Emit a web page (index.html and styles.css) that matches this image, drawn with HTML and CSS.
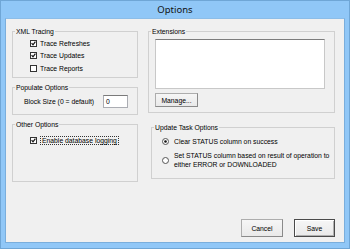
FILE: index.html
```html
<!DOCTYPE html>
<html lang="en">
<head>
    <meta charset="UTF-8">
    <title>Options</title>
    <link rel="stylesheet" href="styles.css">
</head>
<body>
    <div class="window">
        <div class="titlebar">Options</div>
        <div class="client">
            <div class="panes">
                <div class="col col-left">
                    <fieldset class="group group-xml">
                        <legend>XML Tracing</legend>
                        <div class="group-body">
                            <div class="check">
                                <svg class="box" width="7" height="7" viewBox="0 0 7 7"><rect x="0.5" y="0.5" width="6" height="6" fill="#fff" stroke="#333"/><path d="M1.6 3.2 L3 4.8 L5.4 1.6" fill="none" stroke="#111" stroke-width="1.2"/></svg>
                                <span>Trace Refreshes</span>
                            </div>
                            <div class="check">
                                <svg class="box" width="7" height="7" viewBox="0 0 7 7"><rect x="0.5" y="0.5" width="6" height="6" fill="#fff" stroke="#333"/><path d="M1.6 3.2 L3 4.8 L5.4 1.6" fill="none" stroke="#111" stroke-width="1.2"/></svg>
                                <span>Trace Updates</span>
                            </div>
                            <div class="check">
                                <svg class="box" width="7" height="7" viewBox="0 0 7 7"><rect x="0.5" y="0.5" width="6" height="6" fill="#fff" stroke="#333"/></svg>
                                <span>Trace Reports</span>
                            </div>
                        </div>
                    </fieldset>

                    <fieldset class="group group-populate">
                        <legend>Populate Options</legend>
                        <div class="group-body field">
                            <span class="field-label">Block Size (0 = default)</span>
                            <div class="textbox">0</div>
                        </div>
                    </fieldset>

                    <fieldset class="group group-other">
                        <legend>Other Options</legend>
                        <div class="group-body">
                            <div class="check">
                                <svg class="box" width="7" height="7" viewBox="0 0 7 7"><rect x="0.5" y="0.5" width="6" height="6" fill="#fff" stroke="#333"/><path d="M1.6 3.2 L3 4.8 L5.4 1.6" fill="none" stroke="#111" stroke-width="1.2"/></svg>
                                <span class="focus">Enable database logging</span>
                            </div>
                        </div>
                    </fieldset>
                </div>

                <div class="col col-right">
                    <fieldset class="group group-ext">
                        <legend>Extensions</legend>
                        <div class="group-body">
                            <div class="listbox"></div>
                            <button class="btn btn-manage">Manage...</button>
                        </div>
                    </fieldset>

                    <fieldset class="group group-update">
                        <legend>Update Task Options</legend>
                        <div class="group-body">
                            <div class="radio">
                                <svg class="dot" width="7" height="7" viewBox="0 0 7 7"><circle cx="3.5" cy="3.5" r="3" fill="#fff" stroke="#555"/><circle cx="3.5" cy="3.5" r="1.3" fill="#111"/></svg>
                                <span>Clear STATUS column on success</span>
                            </div>
                            <div class="radio">
                                <svg class="dot" width="7" height="7" viewBox="0 0 7 7"><circle cx="3.5" cy="3.5" r="3" fill="#fff" stroke="#555"/></svg>
                                <span>Set STATUS column based on result of operation to<br>either ERROR or DOWNLOADED</span>
                            </div>
                        </div>
                    </fieldset>
                </div>
            </div>

            <div class="actions">
                <button class="btn btn-cancel">Cancel</button>
                <button class="btn btn-save">Save</button>
            </div>
        </div>
    </div>
</body>
</html>
```

FILE: styles.css
```css
body {
    margin: 0;
    font-family: "Liberation Sans", Arial, sans-serif;
    font-size: 6.8px;
    color: #000;
}
.window {
    width: 350px;
    height: 249px;
    box-sizing: border-box;
    background: #90c7f7;
    border: 1px solid #6fa6d6;
    display: flex;
    flex-direction: column;
}
.titlebar {
    height: 17px;
    line-height: 18px;
    text-align: center;
    font-family: "Noto Sans", "Open Sans", sans-serif;
    font-size: 9.5px;
    color: #111;
}
.client {
    margin: 0 4px;
    height: 225px;
    box-sizing: border-box;
    background: #f0f0f0;
    border: 1px solid #7aaedc;
    border-top-color: #8cbde8;
    padding: 8px 9px 5px 6px;
    display: flex;
    flex-direction: column;
}
.panes {
    display: flex;
    gap: 10px;
}
.col {
    display: flex;
    flex-direction: column;
}
.col-left {
    width: 126px;
    gap: 5px;
}
.col-right {
    width: 187px;
    gap: 10px;
}
.group {
    margin: 0;
    padding: 0;
    border: 1px solid #d0d0d0;
    box-sizing: border-box;
    min-width: 0;
}
.group legend {
    padding: 0 1px;
    margin-left: 2px;
    line-height: 9px;
}
.group-xml {
    height: 51px;
}
.group-xml .group-body {
    padding: 1px 0 0 17px;
}
.group-populate {
    height: 32px;
}
.group-populate .group-body {
    padding: 3px 0 0 11px;
}
.group-other {
    height: 62px;
}
.group-other .group-body {
    padding: 5px 0 0 17px;
}
.group-ext {
    height: 86px;
}
.group-ext .group-body {
    padding: 3px 0 0 6px;
}
.group-update {
    height: 56px;
    margin-left: 3px;
}
.group-update .group-body {
    padding: 5px 0 0 10px;
}
.check {
    display: flex;
    align-items: center;
    height: 12.5px;
}
.check .box {
    margin-right: 3px;
    flex: none;
}
.focus {
    border: 1px dotted #333;
    padding: 0 1px;
    line-height: 7px;
}
.field {
    display: flex;
    align-items: center;
}
.field-label {
    width: 79px;
}
.textbox {
    width: 25px;
    height: 13px;
    box-sizing: border-box;
    background: #fff;
    border: 1px solid #abadb3;
    border-top-color: #7a7a7a;
    padding: 1px 2px;
    line-height: 9px;
}
.listbox {
    width: 170px;
    height: 50px;
    box-sizing: border-box;
    background: #fff;
    border: 1px solid #c8c8c8;
    border-top: 1px solid #7c7c7c;
}
.btn {
    font-family: inherit;
    font-size: inherit;
    color: #000;
    box-sizing: border-box;
    background: linear-gradient(#f6f6f6, #e9e9e9);
    border: 1px solid #adadad;
    border-right-color: #8a8a8a;
    border-bottom-color: #8a8a8a;
    padding: 0;
    margin: 0;
}
.btn-manage {
    display: block;
    margin-top: 4px;
    width: 43px;
    height: 14px;
}
.radio {
    display: flex;
    align-items: center;
    line-height: 9px;
    margin-bottom: 5px;
}
.radio .dot {
    flex: none;
    margin-right: 5px;
}
.actions {
    margin-top: auto;
    display: flex;
    justify-content: flex-end;
    gap: 11px;
}
.btn-cancel {
    width: 42px;
    height: 18px;
}
.btn-save {
    width: 41px;
    height: 18px;
    border: 1px solid #4a4a4a;
    box-shadow: inset 1px 1px 0 #fff, inset -1px -1px 0 #b0b0b0;
}
```
